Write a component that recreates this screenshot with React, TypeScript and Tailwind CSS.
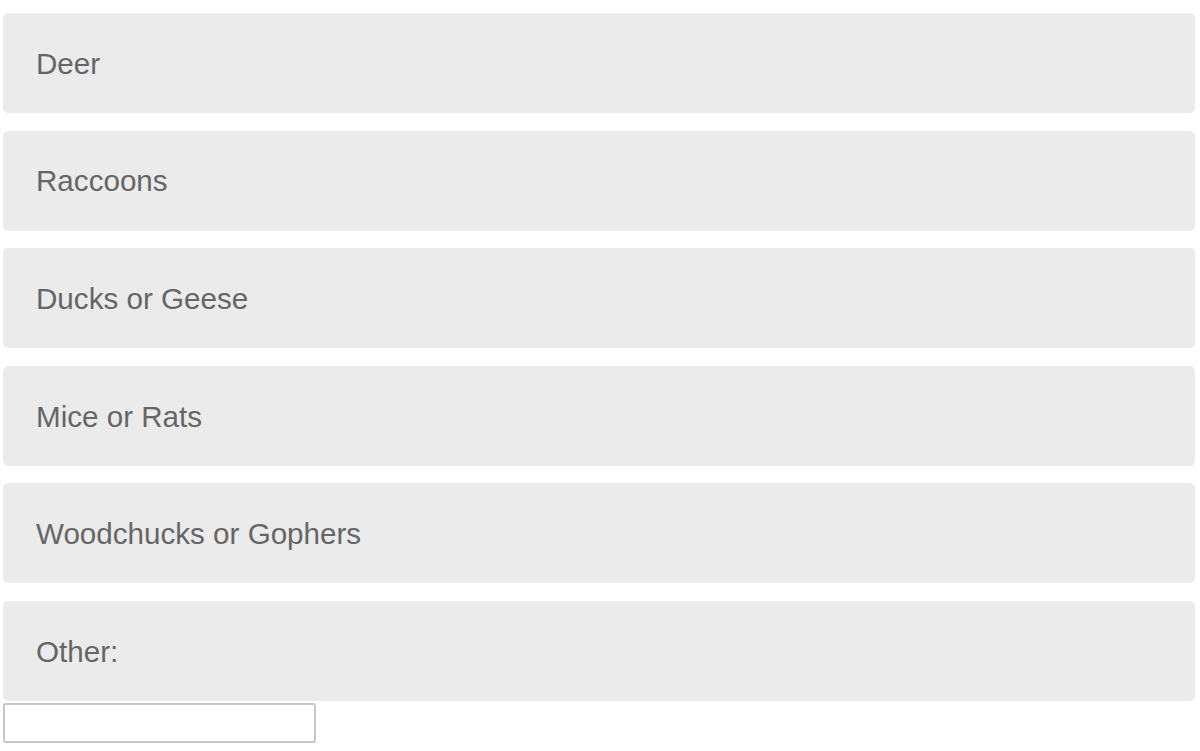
const options = ["Deer", "Raccoons", "Ducks or Geese", "Mice or Rats", "Woodchucks or Gophers", "Other:"];

export default function App() {
    return (
        <div className="w-[1200px] h-[751px] bg-white pt-[13px] px-[3px] font-['Liberation_Sans',Arial,sans-serif] overflow-hidden">
            <div className="flex flex-col gap-[17.6px] w-[1192px]">
                {options.map((label) => (
                    <div
                        key={label}
                        className="h-[100px] rounded-[5px] bg-[#ebebeb] flex items-center pl-[33px] pt-[2px] text-[29.6px] text-[#666666]"
                    >
                        {label}
                    </div>
                ))}
            </div>
            <input
                type="text"
                className="block mt-[2px] w-[313px] h-[40px] border-2 border-[#c6c6c9] rounded-[3px] bg-white"
            />
        </div>
    );
}
